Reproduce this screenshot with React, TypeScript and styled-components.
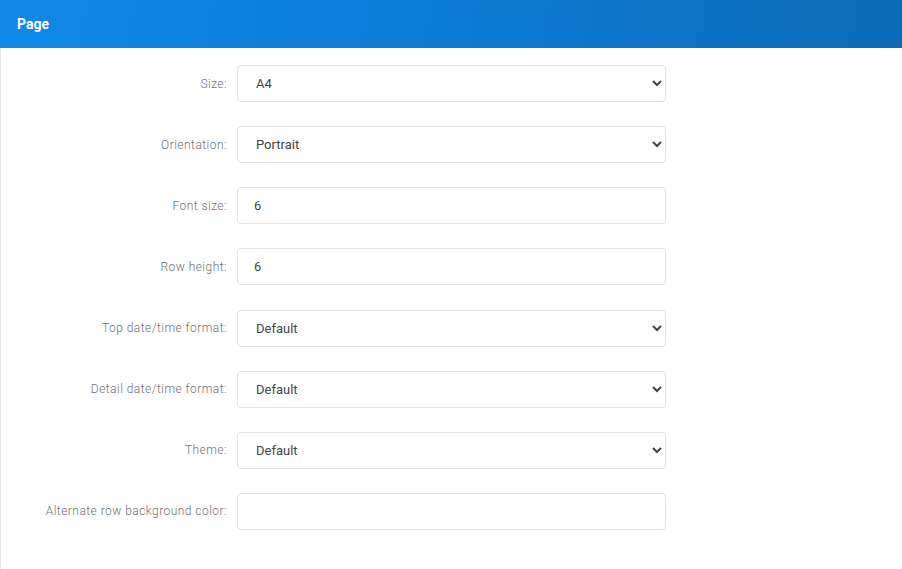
import styled, { createGlobalStyle } from 'styled-components';

const GlobalStyle = createGlobalStyle`
  body {
    margin: 0;
    background: #fff;
    font-family: Roboto, "Liberation Sans", Arial, sans-serif;
  }
`;

const Panel = styled.div`
  width: 902px;
  height: 569px;
  border-left: 1px solid #e3e3e3;
  box-sizing: border-box;
  background: #fff;
`;

const Header = styled.div`
  height: 48px;
  margin-left: -1px;
  display: flex;
  align-items: center;
  padding: 0 17px;
  background: linear-gradient(100deg, #1089e8 0%, #0c7cd6 45%, #0b6bb7 100%);
  color: #fff;
  font-size: 14px;
  font-weight: 700;
`;

const Form = styled.div`
  display: grid;
  grid-template-columns: 236px 429px;
  row-gap: 24.15px;
  padding-top: 17px;
  align-items: center;
`;

const Label = styled.label`
  text-align: right;
  padding-right: 10px;
  font-size: 12px;
  font-weight: 300;
  color: #6f6f6f;
  letter-spacing: 0.46px;
`;

const fieldBase = `
  box-sizing: border-box;
  width: 429px;
  height: 37px;
  border: 1px solid #e2e2e2;
  border-radius: 4px;
  background: #fff;
  font-family: Roboto, "Liberation Sans", Arial, sans-serif;
  font-size: 13px;
  color: #444;
  outline: none;
`;

const Select = styled.select`
  ${fieldBase}
  padding: 0 6px 0 14px;
`;

const Input = styled.input`
  ${fieldBase}
  padding: 0 16px;
`;

type Field = { label: string; kind: 'select' | 'input'; value: string };

const fields: Field[] = [
  { label: 'Size:', kind: 'select', value: 'A4' },
  { label: 'Orientation:', kind: 'select', value: 'Portrait' },
  { label: 'Font size:', kind: 'input', value: '6' },
  { label: 'Row height:', kind: 'input', value: '6' },
  { label: 'Top date/time format:', kind: 'select', value: 'Default' },
  { label: 'Detail date/time format:', kind: 'select', value: 'Default' },
  { label: 'Theme:', kind: 'select', value: 'Default' },
  { label: 'Alternate row background color:', kind: 'input', value: '' },
];

export default function App() {
  return (
    <>
      <GlobalStyle />
      <Panel>
        <Header>Page</Header>
        <Form>
          {fields.map((f) => (
            <>
              <Label key={f.label + '-l'}>{f.label}</Label>
              {f.kind === 'select' ? (
                <Select key={f.label + '-s'} defaultValue={f.value}>
                  <option>{f.value}</option>
                </Select>
              ) : (
                <Input key={f.label + '-i'} defaultValue={f.value} />
              )}
            </>
          ))}
        </Form>
      </Panel>
    </>
  );
}
